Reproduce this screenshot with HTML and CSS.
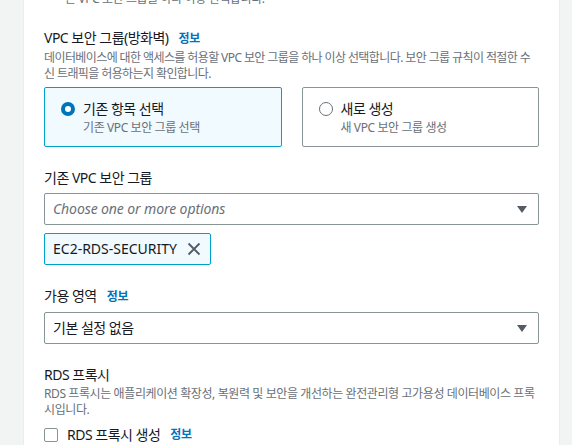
FILE: index.html
```html
<!DOCTYPE html>
<html lang="ko">
<head>
<meta charset="utf-8">
<link rel="stylesheet" href="styles.css">
</head>
<body>
<div class="page">
  <main class="panel">
    <p class="cut-text">는 VPC 보안 그룹을 하나 이상 선택합니다.</p>

    <section class="field">
      <div class="label-row"><span class="label">VPC 보안 그룹(방화벽)</span><a class="info">정보</a></div>
      <p class="desc desc-vpc">데이터베이스에 대한 액세스를 허용할 VPC 보안 그룹을 하나 이상 선택합니다. 보안 그룹 규칙이 적절한 수신 트래픽을 허용하는지 확인합니다.</p>
      <div class="tiles">
        <label class="tile tile-selected">
          <span class="radio radio-on"></span>
          <span class="tile-text">
            <span class="tile-title">기존 항목 선택</span>
            <span class="tile-desc">기존 VPC 보안 그룹 선택</span>
          </span>
        </label>
        <label class="tile">
          <span class="radio"></span>
          <span class="tile-text">
            <span class="tile-title">새로 생성</span>
            <span class="tile-desc">새 VPC 보안 그룹 생성</span>
          </span>
        </label>
      </div>
    </section>

    <section class="field">
      <div class="label-row"><span class="label">기존 VPC 보안 그룹</span></div>
      <div class="select">
        <span class="placeholder">Choose one or more options</span>
        <svg class="caret" width="10" height="7" viewBox="0 0 10 7"><path d="M0 0H10L5 7Z" fill="#545b64"/></svg>
      </div>
      <div class="tokens">
        <div class="token">
          <span class="token-text">EC2-RDS-SECURITY</span>
          <svg class="token-x" width="14" height="14" viewBox="0 0 14 14"><path d="M1.5 1.5L12.5 12.5M12.5 1.5L1.5 12.5" stroke="#545b64" stroke-width="1.8" fill="none"/></svg>
        </div>
      </div>
    </section>

    <section class="field">
      <div class="label-row"><span class="label">가용 영역</span><a class="info">정보</a></div>
      <div class="select">
        <span class="value">기본 설정 없음</span>
        <svg class="caret" width="10" height="7" viewBox="0 0 10 7"><path d="M0 0H10L5 7Z" fill="#545b64"/></svg>
      </div>
    </section>

    <section class="field">
      <div class="label-row"><span class="label">RDS 프록시</span></div>
      <p class="desc">RDS 프록시는 애플리케이션 확장성, 복원력 및 보안을 개선하는 완전관리형 고가용성 데이터베이스 프록시입니다.</p>
      <label class="check-row">
        <span class="checkbox"></span>
        <span class="check-label">RDS 프록시 생성</span>
        <a class="info">정보</a>
      </label>
    </section>
  </main>
</div>
</body>
</html>
```

FILE: styles.css
```css
* { box-sizing: border-box; }
html, body { margin: 0; padding: 0; }
body {
  background: #f2f3f3;
  font-family: "Noto Sans", "Noto Sans CJK KR", sans-serif;
  color: #16191f;
  font-size: 14px;
  line-height: 22px;
  letter-spacing: -0.5px;
  overflow: hidden;
}
.page {
  display: flex;
  padding-left: 23px;
  height: 445px;
}
.panel {
  width: 537px;
  background: #fff;
  border-left: 1px solid #eaeded;
  border-right: 1px solid #eaeded;
  padding: 0 20px;
}
p { margin: 0; }
.cut-text {
  margin-top: -9px;
  padding-left: 21px;
  font-size: 12px;
  line-height: 16px;
  letter-spacing: -0.4px;
  color: #687078;
}
.field { margin-top: 20px; }
.label-row {
  display: flex;
  align-items: baseline;
  gap: 10px;
}
.label { font-size: 14px; line-height: 22px; color: #16191f; }
.info {
  font-size: 12px;
  font-weight: 700;
  letter-spacing: -0.3px;
  color: #0073bb;
}
.desc {
  font-size: 12px;
  line-height: 16px;
  letter-spacing: -0.4px;
  color: #687078;
}
.desc-vpc { letter-spacing: -0.6px; }
.tiles {
  display: grid;
  grid-template-columns: 1fr 1fr;
  gap: 20px;
  margin-top: 5px;
}
.tile {
  display: flex;
  align-items: flex-start;
  gap: 8px;
  padding: 10px 16px;
  border: 1px solid #879596;
  border-radius: 2px;
  background: #fff;
}
.tile-selected {
  background: #f1faff;
  border-color: #00a1c9;
}
.radio {
  flex: none;
  width: 14px;
  height: 14px;
  margin-top: 4px;
  border-radius: 50%;
  border: 1px solid #687078;
  background: #fff;
}
.radio-on {
  border: 4px solid #0073bb;
}
.tile-text { display: flex; flex-direction: column; }
.tile-title { font-size: 14px; line-height: 22px; }
.tile-desc { font-size: 12px; line-height: 16px; letter-spacing: -0.4px; color: #687078; }
.select {
  margin-top: 4px;
  height: 32px;
  border: 1px solid #879596;
  border-radius: 2px;
  display: flex;
  align-items: center;
  justify-content: space-between;
  padding: 0 11px 0 8px;
}
.placeholder { font-style: italic; color: #687078; letter-spacing: -0.1px; }
.caret { flex: none; }
.tokens { display: flex; margin-top: 8px; }
.token {
  display: flex;
  align-items: center;
  gap: 10px;
  height: 32px;
  padding: 0 9px 0 8px;
  background: #f1faff;
  border: 1px solid #00a1c9;
  border-radius: 2px;
}
.token-text { letter-spacing: 0; }
.check-row {
  display: flex;
  align-items: center;
  margin-top: 6px;
}
.checkbox {
  width: 14px;
  height: 14px;
  border: 1px solid #879596;
  border-radius: 2px;
  margin-right: 9px;
}
.check-row .info { margin-left: 10px; }
```
